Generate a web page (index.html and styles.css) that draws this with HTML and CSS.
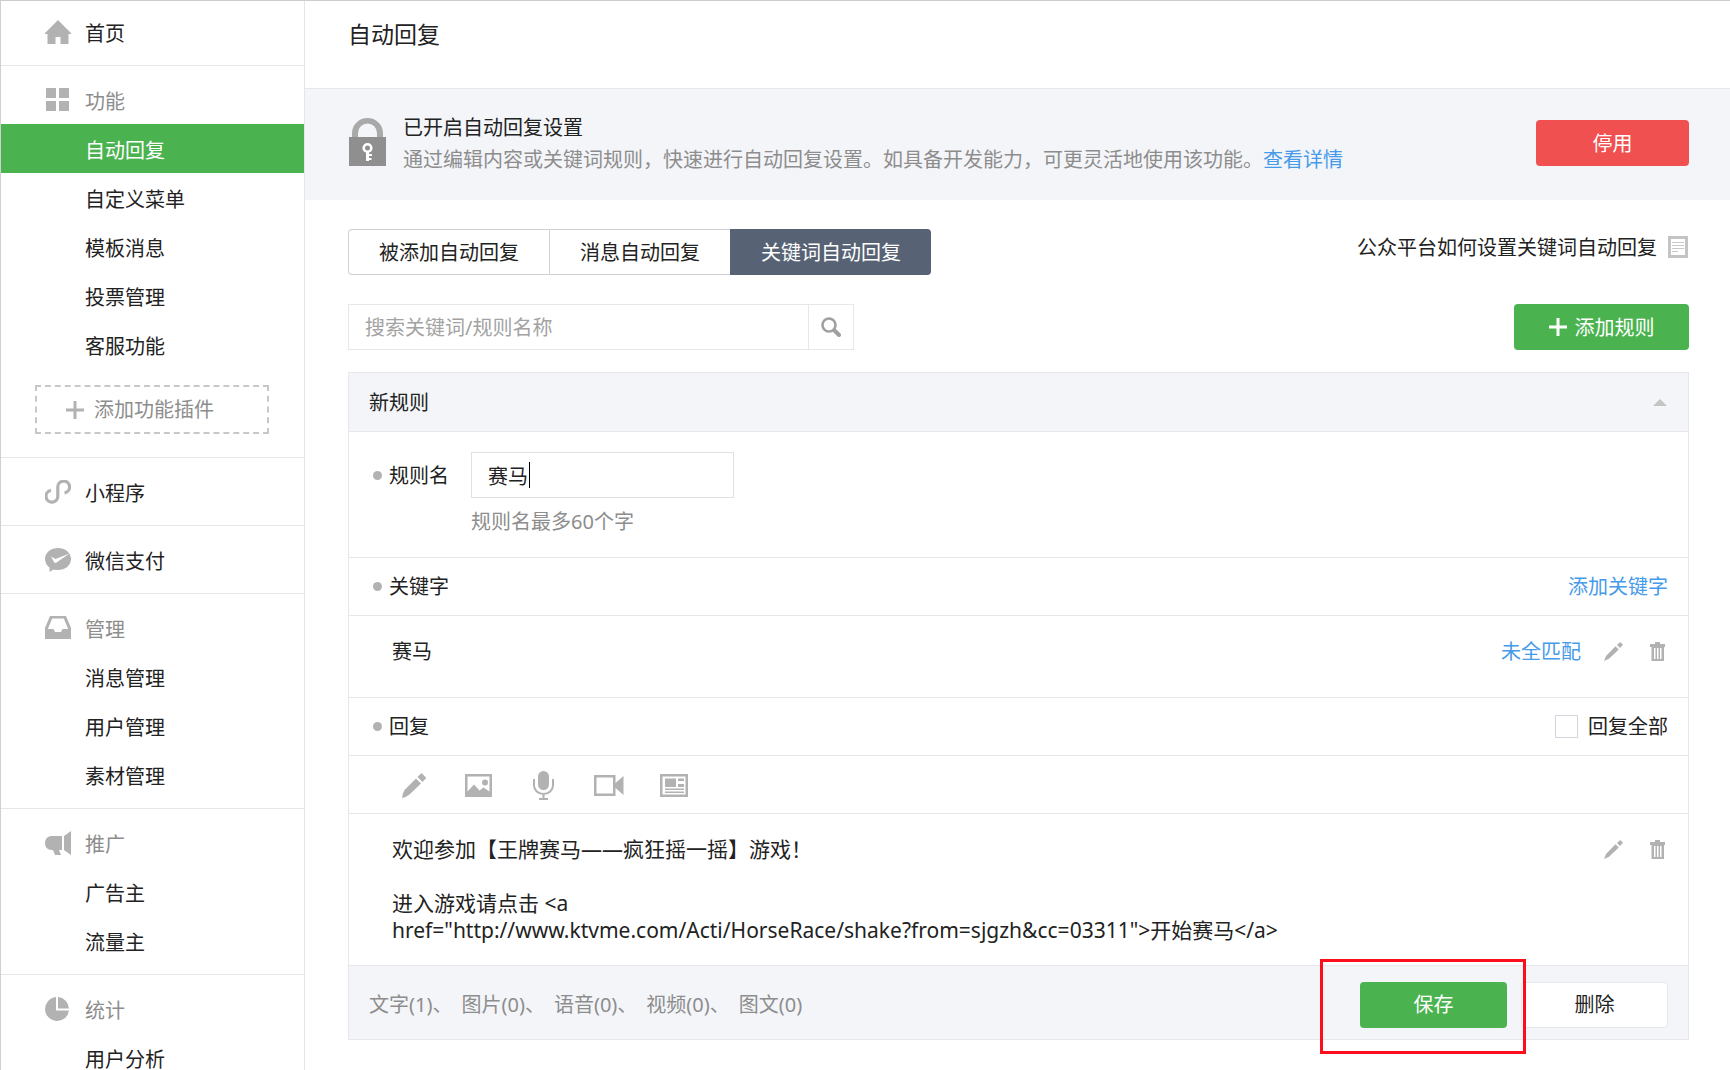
FILE: index.html
```html
<!DOCTYPE html>
<html lang="zh-CN">
<head>
<meta charset="utf-8">
<title>自动回复</title>
<meta name="viewport" content="width=device-width, initial-scale=1">
<link rel="stylesheet" href="styles.css">
</head>
<body>
<svg class="defs" aria-hidden="true">
  <symbol id="pencil" viewBox="0 0 24 25"><path d="M14 5.500 L19 10.500 L7.500 21.500 Q4 24.500 0 25 Q0.500 20.500 2.500 17 Z M15.500 4 L19.500 0 L24.300 4.800 L20.500 9 Z"/></symbol>
  <symbol id="pencil-thin" viewBox="0 0 19 19"><path d="M11.500 4.200 L14.800 7.500 L5 16.700 L0 19 L2 14 Z M13 3 L16.200 0 L19 2.700 L16 6 Z"/></symbol>
  <symbol id="trash" viewBox="0 0 15 19"><path fill-rule="evenodd" d="M5 0h5v2h5v3h-1v14H1.500V5H0V2h5z M4 6v11h1.500V6z M7 6v11h1.500V6z M10 6v11h1.500V6z"/></symbol>
  <symbol id="plus" viewBox="0 0 18 18"><path d="M7.500 0h3v7.500H18v3h-7.500V18h-3v-7.500H0v-3h7.500z"/></symbol>
</svg>
<div class="page">
  <nav class="sidebar">
    <section class="group group-first">
      <a class="group-head is-link" href="#"><svg class="icon" viewBox="0 0 26 24"><path d="M13 0 26 13v1h-2.500v10h-8v-7h-5v7h-8V14H0v-1z"/></svg>首页</a>
    </section>
    <section class="group">
      <h2 class="group-head"><svg class="icon" viewBox="0 0 26 24"><path d="M1 0h10v10H1zM14 0h10v10H14zM1 13h10v10H1zM14 13h10v10H14z"/></svg>功能</h2>
      <a class="item is-active" href="#">自动回复</a>
      <a class="item" href="#">自定义菜单</a>
      <a class="item" href="#">模板消息</a>
      <a class="item" href="#">投票管理</a>
      <a class="item" href="#">客服功能</a>
      <button class="plugin" type="button"><svg class="plus"><use href="#plus"/></svg>添加功能插件</button>
    </section>
    <section class="group">
      <a class="group-head is-link" href="#"><svg class="icon" viewBox="0 0 26 24"><path fill="none" stroke="#b2b2b2" stroke-width="3.200" d="M6 10.400A5.900 5.900 0 1 0 12.800 16V7.500A5.900 5.900 0 1 1 19.500 12.800"/></svg>小程序</a>
    </section>
    <section class="group">
      <a class="group-head is-link" href="#"><svg class="icon" viewBox="0 0 26 24"><path d="M13 0C20 0 26 4.500 26 11S20 22 13 22Q10.500 22 8.500 21.500L4.500 24V19.500Q0 16 0 11C0 4.500 6 0 13 0z"/><path fill="#fff" d="M6 8.500 10.500 11 24.500 5.500 11.500 14.500Q10 15.500 9 14z"/></svg>微信支付</a>
    </section>
    <section class="group">
      <h2 class="group-head"><svg class="icon" viewBox="0 0 26 24"><path fill-rule="evenodd" d="M5 0h16l5 12v11H0V12zM7.200 2.500 2.800 13H8.500L10 16h6l1.500-3h5.700L18.800 2.500z"/></svg>管理</h2>
      <a class="item" href="#">消息管理</a>
      <a class="item" href="#">用户管理</a>
      <a class="item" href="#">素材管理</a>
    </section>
    <section class="group">
      <h2 class="group-head"><svg class="icon" viewBox="0 0 26 24"><path d="M6 5h11v14h-3l2 5h-6l-2-5H6Q0 18 0 12T6 5zM19 5 26 0v24l-7-5z"/></svg>推广</h2>
      <a class="item" href="#">广告主</a>
      <a class="item" href="#">流量主</a>
    </section>
    <section class="group">
      <h2 class="group-head"><svg class="icon" viewBox="0 0 26 24"><path d="M11 0v13.500h13A12 12 0 1 1 11 0zM13 0a12 12 0 0 1 11 11.500H13z"/></svg>统计</h2>
      <a class="item" href="#">用户分析</a>
    </section>
  </nav>

  <main class="main">
    <h1 class="title">自动回复</h1>

    <section class="banner">
      <svg class="lock" viewBox="0 0 37 48"><path fill="#a9a9a9" d="M3 19V15a15.500 15 0 0 1 31 0v4h-6v-4a9.500 9.500 0 0 0-19 0v4z"/><path fill="#8f8f8f" d="M0 19h37v29H0z"/><circle cx="18.500" cy="30" r="3.800" fill="none" stroke="#fff" stroke-width="2.600"/><path fill="#fff" d="M17 33h3v3h3v2h-3v2h2.500v2H20v1h-3z"/></svg>
      <div class="banner-text">
        <h2 class="banner-title">已开启自动回复设置</h2>
        <p class="banner-desc">通过编辑内容或关键词规则，快速进行自动回复设置。如具备开发能力，可更灵活地使用该功能。<a class="link" href="#">查看详情</a></p>
      </div>
      <button class="btn btn-red" type="button">停用</button>
    </section>

    <div class="content">
      <div class="bar">
        <div class="tabs">
          <button class="tab" type="button">被添加自动回复</button>
          <button class="tab" type="button">消息自动回复</button>
          <button class="tab is-current" type="button">关键词自动回复</button>
        </div>
        <a class="help" href="#">公众平台如何设置关键词自动回复<svg class="doc" viewBox="0 0 20 22"><path fill="#c4c4c4" fill-rule="evenodd" d="M0 0h20v22H0zM3 3v16h14V3z"/><path fill="#c9c9c9" d="M4 6h12v1H4zM4 9h12v1H4zM4 12h12v1H4zM4 15h6v1H4z"/></svg></a>
      </div>

      <div class="bar">
        <form class="search">
          <input class="search-input" type="text" placeholder="搜索关键词/规则名称" aria-label="搜索关键词/规则名称">
          <button class="search-btn" type="button" aria-label="搜索"><svg width="20" height="20" viewBox="0 0 20 20"><circle cx="8" cy="8" r="6.500" fill="none" stroke="#a0a0a0" stroke-width="2.600"/><path stroke="#a0a0a0" stroke-width="4" stroke-linecap="round" d="m13.500 13.500 4.500 4.500"/></svg></button>
        </form>
        <button class="btn btn-green btn-add" type="button"><svg class="plus"><use href="#plus"/></svg>添加规则</button>
      </div>

      <section class="panel">
        <header class="panel-head"><h2 class="panel-title">新规则</h2><svg class="arrow" width="14" height="7" viewBox="0 0 14 7"><path fill="#c4c4c4" d="M7 0 14 7H0z"/></svg></header>

        <div class="row row-name">
          <label class="row-label" for="rule-name">规则名</label>
          <div class="field">
            <input class="name-input" id="rule-name" type="text" value="赛马"><span class="caret"></span>
            <p class="note">规则名最多60个字</p>
          </div>
        </div>

        <div class="row row-head"><h3 class="row-label">关键字</h3><a class="link" href="#">添加关键字</a></div>

        <div class="row row-body row-keyword">
          <span>赛马</span>
          <div class="actions">
            <a class="link" href="#">未全匹配</a>
            <button class="icon-btn" type="button" aria-label="编辑"><svg width="19" height="19"><use href="#pencil-thin"/></svg></button>
            <button class="icon-btn" type="button" aria-label="删除"><svg width="15" height="19"><use href="#trash"/></svg></button>
          </div>
        </div>

        <div class="row row-head"><h3 class="row-label">回复</h3><label class="check"><input class="check-box" type="checkbox">回复全部</label></div>

        <div class="row tools">
          <button class="tool" type="button" aria-label="文字"><svg width="24" height="25"><use href="#pencil"/></svg></button>
          <button class="tool" type="button" aria-label="图片"><svg width="27" height="23" viewBox="0 0 27 23"><path fill-rule="evenodd" d="M0 0h27v23H0zM2.500 2.500v15L9 10.500l5.500 6 4-3 6 4V2.500z"/><circle cx="20" cy="8.500" r="3"/></svg></button>
          <button class="tool" type="button" aria-label="语音"><svg width="21" height="29" viewBox="0 0 21 29"><rect x="5" width="11" height="19" rx="5.500"/><path fill="none" stroke="#b2b2b2" stroke-width="2" d="M1 8v6.500a9.500 8.500 0 0 0 19 0V8M10.500 23v5M6 28h9"/></svg></button>
          <button class="tool" type="button" aria-label="视频"><svg width="30" height="21" viewBox="0 0 30 21"><path fill-rule="evenodd" d="M0 0h21.500v8L29.500 1v19l-8-7v8H0zM2.500 2.500v16H19v-16z"/></svg></button>
          <button class="tool" type="button" aria-label="图文"><svg width="28" height="23" viewBox="0 0 28 23"><path fill-rule="evenodd" d="M0 0h28v23H0zM2.500 2.500v18h23v-18z"/><path d="M5 4.500h11v8.500H5zM18 4.500h6V7h-6zM18 10h6v3h-6zM5 14.500h19V16H5zM5 17.500h19V19H5z"/></svg></button>
        </div>

        <div class="row row-body row-reply">
          <p class="reply">欢迎参加【王牌赛马——疯狂摇一摇】游戏！<br><br>进入游戏请点击 &lt;a<br>href="http://www.ktvme.com/Acti/HorseRace/shake?from=sjgzh&amp;cc=03311"&gt;开始赛马&lt;/a&gt;</p>
          <div class="actions">
            <button class="icon-btn" type="button" aria-label="编辑"><svg width="19" height="19"><use href="#pencil-thin"/></svg></button>
            <button class="icon-btn" type="button" aria-label="删除"><svg width="15" height="19"><use href="#trash"/></svg></button>
          </div>
        </div>

        <footer class="panel-foot">
          <p class="counts"><span>文字(1)、</span><span>图片(0)、</span><span>语音(0)、</span><span>视频(0)、</span><span>图文(0)</span></p>
          <div class="foot-buttons">
            <div class="marked"><button class="btn btn-green btn-foot" type="button">保存</button></div>
            <button class="btn btn-plain btn-foot" type="button">删除</button>
          </div>
        </footer>
      </section>
    </div>
  </main>
</div>
</body>
</html>
```

FILE: styles.css
```css
* { box-sizing: border-box; }

body {
  margin: 0;
  height: 100vh;
  overflow: hidden;
  background: #fff;
  color: #222;
  font: 20px/27px "Noto Sans", "Noto Sans CJK SC", sans-serif;
}

h1, h2, h3, p { margin: 0; font-size: 20px; font-weight: 400; }
a { color: inherit; text-decoration: none; }
button, input { margin: 0; font: inherit; color: inherit; }
button { padding: 0; border: 0; background: none; }
svg { display: block; flex: none; fill: #b2b2b2; }

.defs { position: absolute; width: 0; height: 0; }

.page {
  display: flex;
  min-height: 100vh;
  border-top: 1px solid #ccc;
  border-left: 1px solid #d0d0d2;
}

/* Sidebar */
.sidebar { flex: none; width: 304px; border-right: 1px solid #e4e4e9; }
.group { padding: 9px 0; border-bottom: 1px solid #e7e7eb; }
.group-first { padding: 6px 0 9px; }
.group-head {
  display: flex;
  align-items: center;
  gap: 14px;
  height: 49px;
  padding: 3px 0 0 44px;
  color: #8d8d8d;
}
.group-head.is-link { color: #222; }
.icon { width: 26px; height: 24px; margin-bottom: 3px; }
.item { display: flex; align-items: center; height: 49px; padding: 3px 0 0 84px; }
.item.is-active { background: #4ab350; color: #fff; }
.plugin {
  display: flex;
  align-items: center;
  gap: 10px;
  width: 234px;
  height: 49px;
  margin: 16px 0 14px 34px;
  padding-left: 29px;
  border: 2px dashed #c8c8c8;
  color: #8d8d8d;
}
.plus { width: 18px; height: 18px; }

/* Header and banner */
.main { flex: 1; min-width: 0; }
.title { height: 88px; padding: 20px 43px; border-bottom: 1px solid #e7e7eb; font-size: 23px; }
.banner {
  display: flex;
  align-items: flex-start;
  padding: 29px 41px 27px 44px;
  background: #f4f5f9;
}
.lock { width: 37px; height: 48px; }
.banner-text { flex: 1; margin: -4px 0 0 17px; }
.banner-title { margin-bottom: 5px; }
.banner-desc { color: #8d8d8d; }
.link { color: #459ae9; }

.btn {
  display: flex;
  align-items: center;
  justify-content: center;
  height: 46px;
  border-radius: 4px;
  color: #fff;
}
.btn-red { width: 153px; margin-top: 2px; background: #f05050; }
.btn-green { background: #4ab350; }
.btn-add { gap: 8px; width: 175px; }
.btn-add .plus { fill: #fff; }
.btn-foot { width: 147px; }
.btn-plain { border: 1px solid #e7e7eb; background: #fff; color: #222; }

/* Tabs and search */
.content { padding: 29px 41px 30px 43px; }
.bar { display: flex; justify-content: space-between; margin-bottom: 29px; }
.tabs { display: flex; }
.tab { height: 46px; padding: 0 30px; border: 1px solid #d0d0d5; border-right: 0; }
.tab:first-child { border-radius: 4px 0 0 4px; }
.tab:last-child { border-radius: 0 4px 4px 0; }
.tab.is-current { border-color: #576375; background: #576375; color: #fff; }
.help { display: flex; align-items: center; gap: 11px; height: 36px; padding-right: 1px; }
.doc { width: 20px; height: 22px; }

.search { display: flex; width: 506px; height: 46px; border: 1px solid #e7e7eb; }
.search-input { flex: 1; min-width: 0; padding: 0 16px; border: 0; outline: 0; background: none; }
.search-input::placeholder { color: #a3a3a3; opacity: 1; }
.search-btn {
  display: flex;
  align-items: center;
  justify-content: center;
  width: 45px;
  border-left: 1px solid #e7e7eb;
}
.bar + .bar { margin-bottom: 22px; }

/* Rule panel */
.panel { border: 1px solid #e7e7eb; }
.panel-head {
  display: flex;
  align-items: center;
  justify-content: space-between;
  height: 59px;
  padding: 0 21px 0 20px;
  border-bottom: 1px solid #e7e7eb;
  background: #f4f5f9;
}
.row { display: flex; border-bottom: 1px solid #e7e7eb; }
.row-label { display: flex; align-items: center; gap: 7px; }
.row-label::before { content: ""; width: 9px; height: 9px; border-radius: 50%; background: #b2b2b2; }
.row-name { align-items: flex-start; gap: 22px; padding: 20px 24px 22px; }
.row-name .row-label { height: 46px; }
.field { position: relative; }
.name-input {
  display: block;
  width: 263px;
  height: 46px;
  padding: 0 16px;
  border: 1px solid #e0e0e5;
  outline: 0;
}
.caret { position: absolute; top: 10px; left: 58px; width: 1px; height: 26px; background: #000; }
.note { margin-top: 10px; color: #8d8d8d; }
.row-head { align-items: center; justify-content: space-between; height: 58px; padding: 0 20px 0 24px; }
.row-body { align-items: flex-start; justify-content: space-between; padding: 22px 23px 21px 43px; }
.row-keyword { padding-bottom: 32px; }
.reply { font-size: 21px; }
.actions { display: flex; align-items: center; height: 27px; gap: 27px; }
.actions .link { margin-right: -4px; }
.check { display: flex; align-items: center; gap: 10px; }
.check-box {
  width: 23px;
  height: 23px;
  border: 1px solid #d5d6dd;
  background: #fff;
  appearance: none;
}
.tools { height: 58px; padding: 2px 0 0 32px; }
.tool { display: flex; align-items: center; justify-content: center; width: 65px; }

.panel-foot {
  display: flex;
  align-items: center;
  justify-content: space-between;
  height: 73px;
  padding: 4px 20px 0 20px;
  background: #f4f5f9;
}
.counts { display: flex; gap: 9px; color: #8d8d8d; }
.foot-buttons { display: flex; gap: 14px; }
.marked { position: relative; }
.marked::after {
  content: "";
  position: absolute;
  inset: -23px -19px -26px -40px;
  border: 3px solid #fb0f1d;
  pointer-events: none;
}
```
